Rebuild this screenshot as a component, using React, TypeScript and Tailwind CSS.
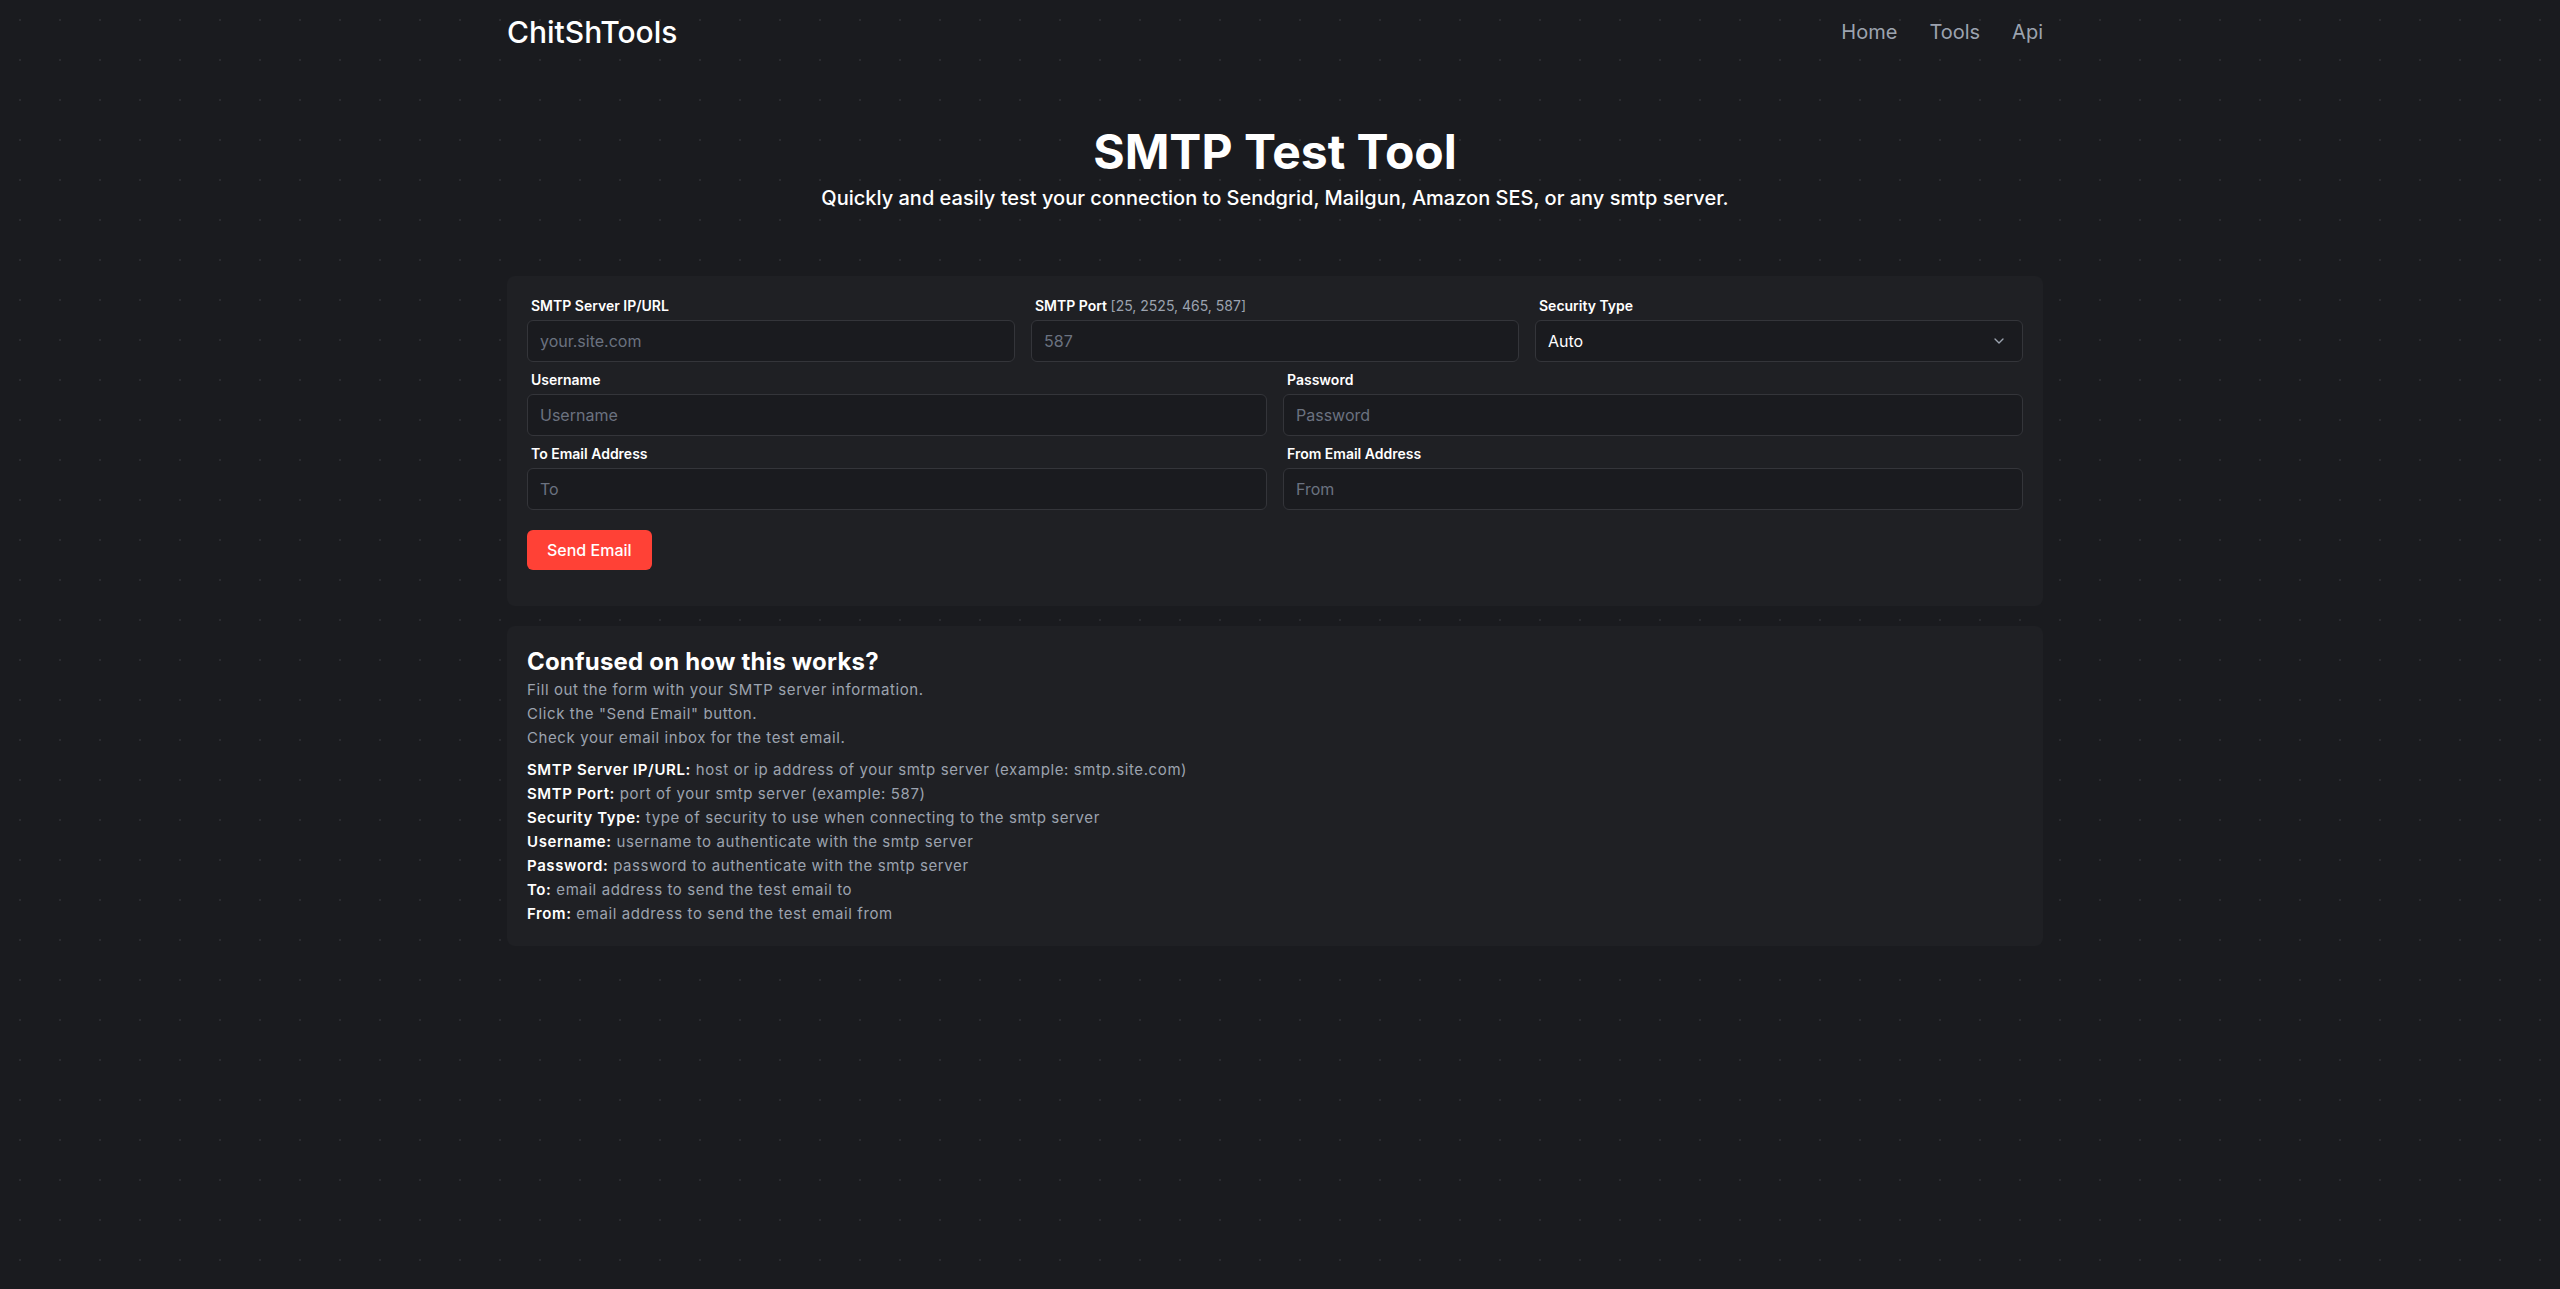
import React from 'react';
import { ChevronDown } from 'lucide-react';

const NAV_LINKS = ['Home', 'Tools', 'Api'];

const HELP_ITEMS: [string, string][] = [
  ['SMTP Server IP/URL:', 'host or ip address of your smtp server (example: smtp.site.com)'],
  ['SMTP Port:', 'port of your smtp server (example: 587)'],
  ['Security Type:', 'type of security to use when connecting to the smtp server'],
  ['Username:', 'username to authenticate with the smtp server'],
  ['Password:', 'password to authenticate with the smtp server'],
  ['To:', 'email address to send the test email to'],
  ['From:', 'email address to send the test email from'],
];

const inputClass =
  'w-full h-[42px] rounded-md border border-[#34353a] bg-[#1a1b1f] px-3 text-base text-white placeholder:text-[#6b7280] outline-none';

const Field: React.FC<{ label: React.ReactNode; children: React.ReactNode }> = ({ label, children }) => (
  <div className="flex flex-col">
    <label className="mb-1 px-1 text-sm leading-5 font-semibold text-white">{label}</label>
    {children}
  </div>
);

const App: React.FC = () => {
  return (
    <div
      className="min-h-screen bg-[#1a1b1f] bg-[radial-gradient(circle,#2a2b30_1.5px,transparent_1.5px)] bg-[size:40px_40px] pr-[10px] text-white"
      style={{ fontFamily: 'Inter, "Noto Sans", sans-serif' }}
    >
      <div className="mx-auto max-w-[1536px]">
        {/* Navbar */}
        <nav className="flex h-16 items-center justify-between">
          <a className="text-3xl font-medium text-white">ChitShTools</a>
          <ul className="flex items-center gap-8">
            {NAV_LINKS.map((link) => (
              <li key={link} className="text-xl text-[#9ca3af]">
                {link}
              </li>
            ))}
          </ul>
        </nav>

        {/* Hero */}
        <header className="mt-16 flex flex-col items-center text-center">
          <h1 className="text-5xl leading-none font-bold">SMTP Test Tool</h1>
          <p className="mt-2 text-xl font-medium">
            Quickly and easily test your connection to Sendgrid, Mailgun, Amazon SES, or any smtp server.
          </p>
        </header>

        {/* Form */}
        <form className="mt-16 rounded-lg bg-[#1f2024] px-5 pt-5 pb-9">
          <div className="grid grid-cols-3 gap-4">
            <Field label="SMTP Server IP/URL">
              <input className={inputClass} placeholder="your.site.com" />
            </Field>
            <Field
              label={
                <>
                  SMTP Port <span className="font-normal text-[#9ca3af]">[25, 2525, 465, 587]</span>
                </>
              }
            >
              <input className={inputClass} placeholder="587" />
            </Field>
            <Field label="Security Type">
              <div className="relative">
                <select className={`${inputClass} appearance-none`} defaultValue="auto">
                  <option value="auto">Auto</option>
                  <option value="ssl">SSL</option>
                  <option value="tls">TLS</option>
                  <option value="none">None</option>
                </select>
                <ChevronDown
                  size={16}
                  className="pointer-events-none absolute top-1/2 right-4 -translate-y-1/2 text-[#9ca3af]"
                />
              </div>
            </Field>
          </div>
          <div className="mt-2 grid grid-cols-2 gap-4">
            <Field label="Username">
              <input className={inputClass} placeholder="Username" />
            </Field>
            <Field label="Password">
              <input className={inputClass} type="password" placeholder="Password" />
            </Field>
          </div>
          <div className="mt-2 grid grid-cols-2 gap-4">
            <Field label="To Email Address">
              <input className={inputClass} placeholder="To" />
            </Field>
            <Field label="From Email Address">
              <input className={inputClass} placeholder="From" />
            </Field>
          </div>
          <button
            type="button"
            className="mt-5 rounded-md bg-[#ff4136] px-5 py-2 text-base font-medium text-white"
          >
            Send Email
          </button>
        </form>

        {/* Help */}
        <section className="mt-5 rounded-lg bg-[#1f2024] p-5">
          <h2 className="text-2xl font-bold tracking-[0.2px]">Confused on how this works?</h2>
          <div className="text-[15px] leading-6 tracking-[0.6px] text-[#9ca3af]">
            <p>Fill out the form with your SMTP server information.</p>
            <p>Click the "Send Email" button.</p>
            <p>Check your email inbox for the test email.</p>
          </div>
          <div className="mt-2 text-[15px] leading-6 tracking-[0.6px] text-[#9ca3af]">
            {HELP_ITEMS.map(([term, desc]) => (
              <p key={term}>
                <span className="font-semibold text-white">{term}</span> {desc}
              </p>
            ))}
          </div>
        </section>
      </div>
    </div>
  );
};

export default App;
